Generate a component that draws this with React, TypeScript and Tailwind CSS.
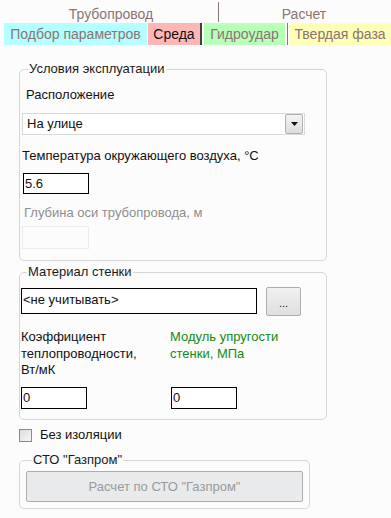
import React from 'react';

const font = { fontFamily: '"Liberation Sans", Arial, sans-serif' };

// Заголовок группы, как у WinForms GroupBox
function Group({ title, className = '', children }: { title: string; className?: string; children: React.ReactNode }) {
  return (
    <fieldset className={`border border-[#d6d6d6] rounded-[5px] ${className}`}>
      <legend className="ml-[6px] px-[1px] text-[13px] leading-[14px] text-[#1a1a1a]">{title}</legend>
      {children}
    </fieldset>
  );
}

export default function App() {
  return (
    <div className="w-[391px] h-[518px] bg-[#fcfcfc] text-[13px] text-[#111] overflow-hidden" style={font}>
      {/* верхний заголовок вкладок */}
      <div className="flex h-[23px] pl-[4px] text-[#8b7474]">
        <div className="w-[214px] flex items-end justify-center text-[14px] leading-[17px]">Трубопровод</div>
        <div className="flex-1 flex items-end justify-center text-[14px] leading-[17px]">
          <div className="self-stretch w-px bg-[#8b7474] mt-[2px] mb-[1px] mr-auto" />
          <span className="mr-auto -ml-[2px]">Расчет</span>
        </div>
      </div>
      <div className="flex h-[22px] pl-[4px] text-[14px] text-[#8b7474]">
        <div className="w-[143px] bg-[#b4ffff] flex items-center justify-center">Подбор параметров</div>
        <div className="ml-px w-[54px] bg-[#ffb6b6] border-r-2 border-[#404040] flex items-center justify-center text-[#111]">Среда</div>
        <div className="ml-[2px] w-[81px] bg-[#b8ffb8] flex items-center justify-center">Гидроудар</div>
        <div className="ml-[2px] w-px bg-[#8b7474]" />
        <div className="ml-px flex-1 bg-[#ffffb8] flex items-center justify-center">Твердая фаза</div>
      </div>

      <div className="pl-[19px] w-[327px]">
        <Group title="Условия эксплуатации" className="mt-[17px] h-[199px] px-[2px]">
          <div className="ml-[4px] mt-[12px] leading-[14px]">Расположение</div>
          <div className="mt-[11px] h-[22px] w-[283px] bg-white border border-[#dadada] flex items-center">
            <span className="ml-[4px] flex-1">На улице</span>
            <div className="w-[18px] h-[20px] mr-px border border-[#b0b0b0] rounded-[2px] bg-gradient-to-b from-[#f4f4f4] to-[#dcdcdc] flex items-center justify-center">
              <svg width="7" height="4" viewBox="0 0 7 4"><path d="M0 0h7L3.5 4z" fill="#111" /></svg>
            </div>
          </div>
          <div className="mt-[14px] leading-[14px]">Температура окружающего воздуха, °C</div>
          <div className="mt-[10px] ml-px w-[66px] h-[21px] border border-black bg-white leading-[19px] pl-px">5.6</div>
          <div className="mt-[12px] ml-[2px] leading-[14px] text-[#8e8e8e]">Глубина оси трубопровода, м</div>
          <div className="mt-[6px] w-[67px] h-[23px] border border-[#ececec] bg-[#fcfcfc]" />
        </Group>

        <Group title="Материал стенки" className="mt-[4px] h-[155px] px-px">
          <div className="mt-[9px] flex items-start">
            <div className="w-[236px] h-[26px] border border-black bg-white pl-px leading-[22px]">&lt;не учитывать&gt;</div>
            <div className="ml-[9px] -mt-px w-[35px] h-[29px] border border-[#adadad] rounded-[2px] bg-gradient-to-b from-[#f1f1f1] to-[#dfdfdf] flex items-center justify-center text-[11px] pt-[4px]">...</div>
          </div>
          <div className="mt-[13px] flex leading-[16.5px]">
            <div className="w-[149px]">Коэффициент<br />теплопроводности,<br />Вт/мК</div>
            <div className="text-[#138a13]">Модуль упругости<br />стенки, МПа</div>
          </div>
          <div className="mt-[8px] flex">
            <div className="w-[66px] h-[22px] border border-black bg-white pl-px leading-[20px]">0</div>
            <div className="ml-[84px] w-[66px] h-[22px] border border-black bg-white pl-px leading-[20px]">0</div>
          </div>
        </Group>

        <div className="mt-[8px] flex items-center h-[14px]">
          <div className="w-[13px] h-[13px] border border-[#8a8a8a] bg-gradient-to-br from-[#dcdcdc] to-[#f6f6f6]" />
          <span className="ml-[8px]">Без изоляции</span>
        </div>

        <Group title={'СТО "Газпром"'} className="mt-[11px] h-[56px] w-[291px] px-[6px]">
          <div className="mt-[4px] h-[31px] border border-[#adadad] rounded-[2px] bg-[#e8eaec] flex items-center justify-center text-[#9a9a9a]">Расчет по СТО "Газпром"</div>
        </Group>
      </div>
    </div>
  );
}
